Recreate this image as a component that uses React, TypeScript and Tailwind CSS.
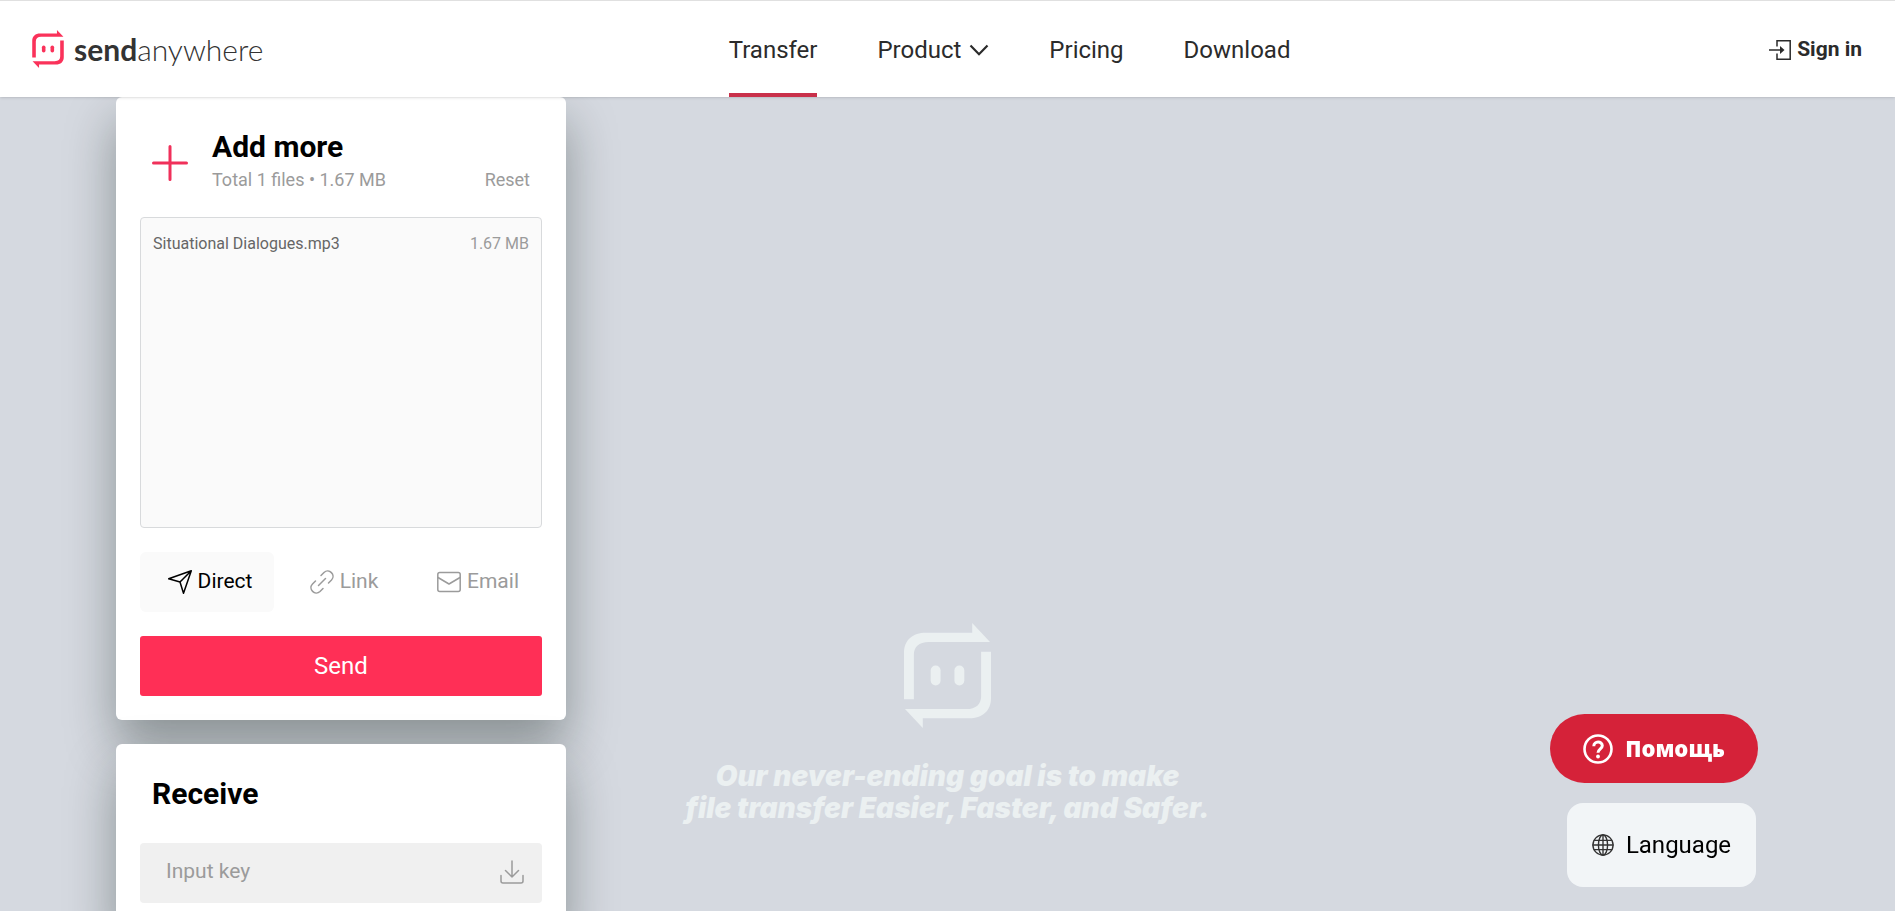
import type { ReactNode } from "react";

type LinkItem = {
	label: string;
	active?: boolean;
	menu?: boolean;
};

const NAV_ITEMS: LinkItem[] = [
	{ label: "Transfer", active: true },
	{ label: "Product", menu: true },
	{ label: "Pricing" },
	{ label: "Download" }
];

const FILES = [{ name: "Situational Dialogues.mp3", size: "1.67 MB" }];

function LogoMark({ className }: { className: string }) {
	return (
		<svg viewBox="0 0 88 106" fill="currentColor" className={className} aria-hidden="true">
			<path d="M0 77V30C0 17 9 9.700 22 9.700H69V0L87 19H25C15 19 10 24 10 32V77Z" />
			<path d="M88 29V76C88 89 79 96.300 66 96.300H19V106L1 87H63C73 87 78 82 78 74V29Z" />
			<rect x="27" y="43" width="10" height="20" rx="5" />
			<rect x="51" y="43" width="10" height="20" rx="5" />
		</svg>
	);
}

function Icon({ children, className }: { children: ReactNode; className: string }) {
	return (
		<svg
			viewBox="0 0 24 24"
			fill="none"
			stroke="currentColor"
			strokeWidth="1.5"
			strokeLinecap="round"
			strokeLinejoin="round"
			className={className}
			aria-hidden="true"
		>
			{children}
		</svg>
	);
}

function Header() {
	return (
		<header className="relative z-10 flex h-[97px] shrink-0 items-stretch justify-between border-t border-[#e0e0e0] bg-white pr-[33px] pl-8 text-[#2b2b2b] shadow-sm">
			<a href="#" className="flex w-[218px] items-center gap-2.5 whitespace-nowrap" aria-label="sendanywhere">
				<LogoMark className="h-[38px] w-8 shrink-0 text-[#fa325a]" />
				<span className="font-[Lato] text-3xl leading-none text-[#333]">
					<span className="font-bold">send</span>
					<span className="font-light">anywhere</span>
				</span>
			</a>
			<nav className="flex gap-[60px] text-2xl">
				{NAV_ITEMS.map((item) => (
					<a
						key={item.label}
						href="#"
						className={
							item.active
								? "flex items-center border-b-4 border-b-[#c9304a] pt-1.5"
								: "flex items-center gap-2 pt-0.5"
						}
					>
						{item.label}
						{item.menu ? (
							<svg viewBox="0 0 20 12" fill="none" stroke="currentColor" strokeWidth="2.2" className="h-3 w-5" aria-hidden="true">
								<path d="M1.5 1.5 10 10.2 18.500 1.5" />
							</svg>
						) : null}
					</a>
				))}
			</nav>
			<a href="#" className="flex items-center gap-1.5 pt-0.5 text-[21px] font-bold">
				<svg viewBox="0 0 22 20" fill="none" stroke="currentColor" strokeWidth="1.5" className="h-5 w-[22px]" aria-hidden="true">
					<path d="M8 6.500V.8H21.200V19.200H8V13.500M0 10H12" />
					<path d="M11 6 15.500 10 11 14Z" fill="currentColor" stroke="none" />
				</svg>
				Sign in
			</a>
		</header>
	);
}

function Card({ children }: { children: ReactNode }) {
	return (
		<section className="rounded-md bg-white p-6 shadow-[0_25px_50px_rgba(10,24,18,0.37)]">
			{children}
		</section>
	);
}

function SendCard() {
	return (
		<Card>
			<div className="flex items-center px-3 pt-2">
				<button type="button" aria-label="Add files" className="pt-0.5 text-[#f0305a]">
					<svg viewBox="0 0 36 36" stroke="currentColor" strokeWidth="3" strokeLinecap="round" className="size-9">
						<path d="M18 1.500V34.500M1.500 18H34.500" />
					</svg>
				</button>
				<div className="ml-6 flex-1">
					<h2 className="text-3xl leading-9 font-bold text-black">Add more</h2>
					<div className="flex justify-between text-lg leading-[30px] text-[#9b9b9b]">
						<span>Total 1 files • 1.67 MB</span>
						<button type="button">Reset</button>
					</div>
				</div>
			</div>
			<ul className="mt-[22px] h-[311px] rounded-sm border border-[#d8dadc] bg-[#fafafa] py-3.5">
				{FILES.map((file) => (
					<li key={file.name} className="flex justify-between px-3 text-base text-[#666]">
						<span>{file.name}</span>
						<span className="text-[#9b9b9b]">{file.size}</span>
					</li>
				))}
			</ul>
			<div className="mt-6 grid grid-cols-3 text-[21px] text-[#9b9b9b]">
				<button type="button" className="flex h-[60px] items-center justify-center gap-1.5 rounded-md bg-[#fafafa] pl-1.5 text-black">
					<Icon className="size-6">
						<path d="M23.300.8 15.500 23.300 12 12 .7 8.800ZM23.300.8 12 12" />
					</Icon>
					Direct
				</button>
				<button type="button" className="flex h-[60px] items-center justify-center gap-1.5 pl-1.5">
					<Icon className="size-6">
						<path d="M8.500 15.500 15.500 8.500M11 5.500 14 2.500C19-2.200 26.200 5 21.500 10L18.500 13M5.500 11 2.500 14C-2.200 19 5 26.200 10 21.500L13 18.500" />
					</Icon>
					Link
				</button>
				<button type="button" className="flex h-[60px] items-center justify-center gap-1.5 pl-1.5">
					<Icon className="size-6">
						<rect x=".8" y="2.500" width="22.400" height="19" rx="2" />
						<path d="M1 7.500 12 14 23 7.500" />
					</Icon>
					Email
				</button>
			</div>
			<button type="button" className="mt-6 h-[60px] w-full rounded-[3px] bg-[#ff2f56] text-2xl text-white">
				Send
			</button>
		</Card>
	);
}

function ReceiveCard() {
	return (
		<Card>
			<h2 className="px-3 pt-2 text-3xl leading-9 font-bold text-black">Receive</h2>
			<div className="mt-[31px] flex h-[60px] items-center rounded-sm bg-[#f0f0f0] pr-[18px] pb-0.5 pl-[26px] text-[#9b9b9b]">
				<input
					type="text"
					aria-label="Input key"
					placeholder="Input key"
					className="min-w-0 flex-1 bg-transparent text-[21px] outline-none placeholder:text-[#9b9b9b]"
				/>
				<button type="button" aria-label="Receive">
					<Icon className="size-6">
						<path d="M12 1V17M5.500 10.500 12 17 18.500 10.500M1 15.500V21A2 2 0 0 0 3 23H21A2 2 0 0 0 23 21V15.500" />
					</Icon>
				</button>
			</div>
		</Card>
	);
}

function Tagline() {
	return (
		<div className="col-start-1 row-start-1 mb-[87px] flex flex-col items-center self-end text-[#ebf0f1]">
			<LogoMark className="h-[105px] w-[87px]" />
			<p className="mt-8 text-center font-[Inter] text-[28px] leading-8 font-black italic">
				Our never-ending goal is to make
				<br />
				file transfer Easier, Faster, and Safer.
			</p>
		</div>
	);
}

function FloatingActions() {
	return (
		<div className="fixed right-[137px] bottom-6 z-20 flex flex-col items-end gap-5">
			<button
				type="button"
				className="flex h-[69px] w-52 items-center justify-center gap-3 rounded-full bg-[#d52239] font-['Open_Sans'] text-[22px] font-extrabold text-white"
			>
				<svg viewBox="0 0 30 30" fill="none" stroke="currentColor" strokeWidth="3" className="size-[30px]" aria-hidden="true">
					<circle cx="15" cy="15" r="13.500" strokeWidth="2.600" />
					<path d="M10.800 12.200C10.800 6.800 19.300 6.800 19.300 11.800C19.300 14.800 15 15 15 18.800" />
					<circle cx="15" cy="22.500" r="1.900" fill="currentColor" stroke="none" />
				</svg>
				Помощь
			</button>
			<button
				type="button"
				className="mr-0.5 flex h-[84px] w-[189px] items-center justify-center gap-3 rounded-2xl bg-[#f2f5f7] text-2xl text-black"
			>
				<Icon className="size-[22px] text-[#333]">
					<circle cx="12" cy="12" r="11" />
					<ellipse cx="12" cy="12" rx="5" ry="11" />
					<path d="M12 1V23M1 12H23M2.500 7H21.500M2.500 17H21.500" />
				</Icon>
				Language
			</button>
		</div>
	);
}

export default function App() {
	return (
		<div className="flex h-screen flex-col overflow-hidden bg-[#d5d9e0] font-[Roboto,sans-serif]">
			<Header />
			<main className="grid min-h-0 flex-1 grid-rows-[100%] overflow-hidden">
				<Tagline />
				<div className="col-start-1 row-start-1 ml-[116px] flex w-[450px] flex-col gap-6">
					<SendCard />
					<ReceiveCard />
				</div>
			</main>
			<FloatingActions />
		</div>
	);
}
